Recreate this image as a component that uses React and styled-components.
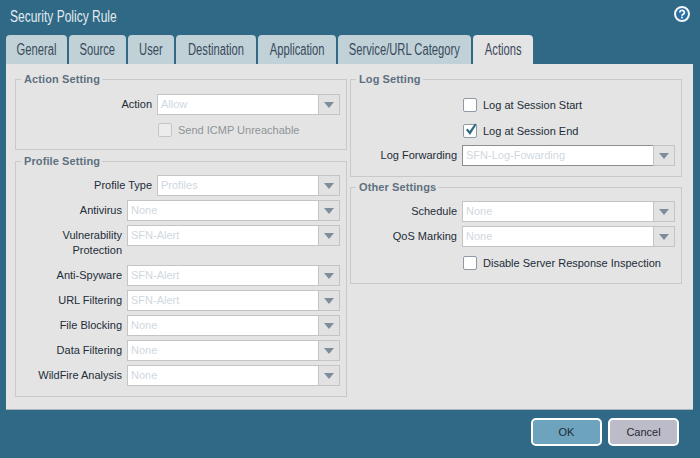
import React from "react";
import styled, { createGlobalStyle } from "styled-components";

const GlobalStyle = createGlobalStyle`
  html, body {
    margin: 0;
    padding: 0;
    background: #2f6986;
  }
  body {
    font-family: "Liberation Sans", Arial, sans-serif;
    font-size: 11px;
    color: #1f2a36;
  }
`;

const Dialog = styled.div`
  width: 700px;
  height: 458px;
  box-sizing: border-box;
  padding: 0 7px 0 6px;
  background: #2f6986;
  overflow: hidden;
`;

const TitleBar = styled.div`
  height: 35px;
  display: flex;
  justify-content: space-between;
  align-items: flex-start;
`;

// no condensed family is installed, so the narrow heading face is squeezed
const Title = styled.div`
  font-size: 16px;
  line-height: 17px;
  margin: 8px 0 0 4px;
  color: #e3ebef;
  transform: scaleX(0.75);
  transform-origin: left center;
  white-space: nowrap;
`;

const HelpIcon = styled.svg`
  width: 16px;
  height: 16px;
  margin: 6px 3px 0 0;
`;

const Tabs = styled.div`
  display: flex;
  height: 29px;
`;

const Tab = styled.div`
  width: ${(p) => p.$w}px;
  margin-right: 2px;
  box-sizing: border-box;
  border-radius: 4px 4px 0 0;
  background: ${(p) => (p.$active ? "#e4e4e4" : "#c0d2d8")};
  display: flex;
  justify-content: center;
`;

const TabLabel = styled.span`
  color: #3a4a5c;
  font-size: 16px;
  line-height: 29px;
  white-space: nowrap;
  transform: scaleX(0.7);
`;

const Panel = styled.div`
  height: 346px;
  box-sizing: border-box;
  background: #e4e4e4;
  border-bottom: 1px solid #a9b4ba;
  padding: 9px 11px 0 9px;
  display: grid;
  grid-template-columns: 332px 332px;
  column-gap: 3px;
  align-items: start;
`;

const Column = styled.div`
  display: flex;
  flex-direction: column;
  gap: ${(p) => p.$gap}px;
`;

const Group = styled.fieldset`
  margin: 0;
  min-width: 0;
  height: ${(p) => p.$h}px;
  box-sizing: border-box;
  border: 1px solid #c9c9c9;
  padding: 0 6px 0 0;
  display: flex;
  flex-direction: column;
`;

const Legend = styled.legend`
  margin-left: 5px;
  padding: 0 2px 0 3px;
  font-size: 11px;
  line-height: 13px;
  font-weight: bold;
  letter-spacing: 0.1px;
  color: #5f7080;
`;

const Row = styled.div`
  display: flex;
  justify-content: flex-end;
  gap: 5px;
  height: ${(p) => p.$h || 25}px;
`;

const Label = styled.label`
  line-height: 15px;
  padding-top: 3px;
  text-align: right;
  color: #222c38;
  flex: 1;
  min-width: 0;
  padding-left: ${(p) => p.$inset || 0}px;
`;

const Select = styled.div`
  width: ${(p) => p.$w}px;
  flex: none;
  height: 21px;
  box-sizing: border-box;
  display: flex;
  border: 1px solid ${(p) => (p.$focus ? "#8e8e8e" : "#c4c4c4")};
  background: #fff;
`;

const SelectText = styled.div`
  flex: 1;
  padding-left: 3px;
  line-height: 19px;
  color: #cfd8df;
`;

const SelectArrow = styled.div`
  width: 20px;
  flex: none;
  display: flex;
  align-items: center;
  justify-content: center;
  background: #e2e2e2;
  border-left: 1px solid #c4c4c4;
  margin: ${(p) => (p.$focus ? "-1px -1px -1px 0" : "0")};
  border-top: ${(p) => (p.$focus ? "1px solid #c4c4c4" : "0")};
  border-bottom: ${(p) => (p.$focus ? "1px solid #c4c4c4" : "0")};
  border-right: ${(p) => (p.$focus ? "1px solid #c4c4c4" : "0")};
  &::after {
    content: "";
    width: 0;
    height: 0;
    border-left: 5px solid transparent;
    border-right: 5px solid transparent;
    border-top: 6px solid #7d8d9b;
  }
`;

const CheckRow = styled.div`
  display: flex;
  align-items: center;
  gap: 6px;
  margin-left: ${(p) => p.$left}px;
  height: ${(p) => p.$h || 26}px;
  color: ${(p) => (p.$disabled ? "#8f9498" : "#222c38")};
`;

const Box = styled.span`
  position: relative;
  width: 14px;
  height: 14px;
  box-sizing: border-box;
  border: 1px solid ${(p) => (p.$disabled ? "#c2c6c9" : "#8f99a3")};
  border-radius: 2px;
  background: ${(p) => (p.$disabled ? "#ececec" : "#fff")};
`;

const Tick = styled.svg`
  position: absolute;
  left: 0;
  top: -3px;
  width: 14px;
  height: 15px;
`;

const Spacer = styled.div`
  height: ${(p) => p.$h}px;
  flex: none;
`;

const Footer = styled.div`
  display: flex;
  justify-content: flex-end;
  gap: 6px;
  padding: 8px 14px 0 0;
`;

const Button = styled.button`
  width: 71px;
  height: 28px;
  box-sizing: border-box;
  border: 2px solid #fff;
  border-radius: 5px;
  background: ${(p) => (p.$primary ? "#6da3bc" : "#bbbcc7")};
  color: #1f2a36;
  font-family: "Liberation Sans", Arial, sans-serif;
  font-size: 11px;
  padding: 0;
`;

const TABS = [
  ["General", 61],
  ["Source", 57],
  ["User", 46],
  ["Destination", 80],
  ["Application", 78],
  ["Service/URL Category", 133],
  ["Actions", 60],
];

const PROFILE_ROWS = [
  ["Profile Type", "Profiles", 183],
  ["Antivirus", "None", 213],
  ["Vulnerability Protection", "SFN-Alert", 213, 40, 30],
  ["Anti-Spyware", "SFN-Alert", 213],
  ["URL Filtering", "SFN-Alert", 213],
  ["File Blocking", "None", 213],
  ["Data Filtering", "None", 213],
  ["WildFire Analysis", "None", 213],
];

const Field = ({ label, value, width, height, inset, focus }) => (
  <Row $h={height}>
    <Label $inset={inset}>{label}</Label>
    <Select $w={width} $focus={focus}>
      <SelectText>{value}</SelectText>
      <SelectArrow $focus={focus} />
    </Select>
  </Row>
);

const Check = ({ left, label, checked, disabled, height }) => (
  <CheckRow $left={left} $disabled={disabled} $h={height}>
    <Box $disabled={disabled}>
      {checked && (
        <Tick viewBox="0 0 14 15">
          <path d="M2 8 L3.6 6.6 L5.6 9 L11 1.5 L12.6 2.6 L6 13 Z" fill="#2f6986" />
        </Tick>
      )}
    </Box>
    {label}
  </CheckRow>
);

export default function App() {
  return (
    <Dialog>
      <GlobalStyle />
      <TitleBar>
        <Title>Security Policy Rule</Title>
        <HelpIcon viewBox="0 0 16 16">
          <circle cx="8" cy="8" r="7" fill="#2a6ea6" stroke="#f2f6f8" strokeWidth="2" />
          <path d="M5.8 6.4a2.3 2.1 0 1 1 3.4 1.9c-.8.5-1.2.8-1.2 1.5" fill="none" stroke="#fff" strokeWidth="1.7" />
          <circle cx="8" cy="11.6" r="1" fill="#fff" />
        </HelpIcon>
      </TitleBar>
      <Tabs>
        {TABS.map(([name, w]) => (
          <Tab key={name} $w={w} $active={name === "Actions"}>
            <TabLabel>{name}</TabLabel>
          </Tab>
        ))}
      </Tabs>
      <Panel>
        <Column $gap={5}>
          <Group $h={77}>
            <Legend>Action Setting</Legend>
            <Spacer $h={8} />
            <Field label="Action" value="Allow" width={183} />
            <Check left={142} label="Send ICMP Unreachable" disabled height={22} />
          </Group>
          <Group $h={242}>
            <Legend>Profile Setting</Legend>
            <Spacer $h={7} />
            {PROFILE_ROWS.map(([label, value, width, height, inset]) => (
              <Field key={label} label={label} value={value} width={width} height={height} inset={inset} />
            ))}
          </Group>
        </Column>
        <Column $gap={4}>
          <Group $h={104}>
            <Legend>Log Setting</Legend>
            <Spacer $h={6} />
            <Check left={112} label="Log at Session Start" />
            <Check left={112} label="Log at Session End" checked />
            <Spacer $h={1} />
            <Field label="Log Forwarding" value="SFN-Log-Fowarding" width={213} focus />
          </Group>
          <Group $h={103}>
            <Legend>Other Settings</Legend>
            <Spacer $h={7} />
            <Field label="Schedule" value="None" width={213} />
            <Field label="QoS Marking" value="None" width={213} />
            <Check left={112} label="Disable Server Response Inspection" height={24} />
          </Group>
        </Column>
      </Panel>
      <Footer>
        <Button $primary>OK</Button>
        <Button>Cancel</Button>
      </Footer>
    </Dialog>
  );
}
